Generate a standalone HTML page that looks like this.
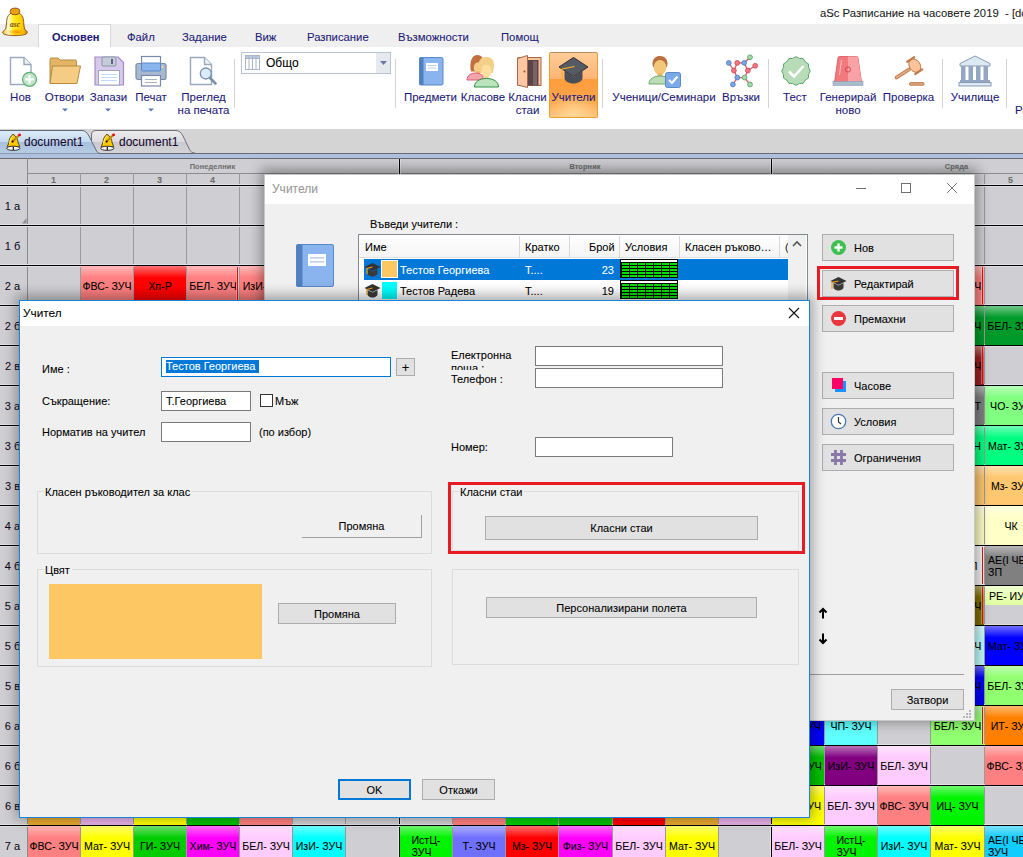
<!DOCTYPE html><html><head><meta charset="utf-8"><style>
*{box-sizing:border-box}
html,body{margin:0;padding:0}
body{width:1023px;height:857px;overflow:hidden;position:relative;background:#fff;font-family:"Liberation Sans",sans-serif;font-size:12px;color:#000;-webkit-text-stroke:0.08px currentColor}
.a{position:absolute}
.rib{color:#1e1a78;font-size:11.5px;white-space:nowrap;text-align:center;line-height:13px}
.sep{position:absolute;width:1px;background:#d4d4d4;top:59px;height:49px}
.cell{position:absolute;overflow:hidden;padding-top:0;display:flex;align-items:center;justify-content:center;text-align:center;font-size:10.6px;line-height:12px;color:#000;white-space:nowrap}
.btn{position:absolute;background:#e1e1e1;border:1px solid #adadad;font-size:11px;display:flex;align-items:center;justify-content:center;color:#000}
.inp{position:absolute;background:#fff;border:1px solid #7a7a7a}
.lbl{position:absolute;font-size:11px;white-space:nowrap;line-height:14px}
.grp{position:absolute;border:1px solid #dcdcdc}
.grpl{position:absolute;background:#f0f0f0;padding:0 2px 0 1px;font-size:11px;line-height:14px;white-space:nowrap}
</style></head><body>

<div class="a" style="left:0;top:0;width:1023px;height:24px;background:#fff"></div>
<div class="a" style="left:820px;top:6px;font-size:11.3px;white-space:nowrap;color:#1a1a1a;line-height:14px">aSc Разписание на часовете 2019&nbsp; - [document1]</div>
<div class="a" style="left:0;top:24px;width:1023px;height:23px;background:#efefef"></div>
<div class="a" style="left:38px;top:24px;width:73px;height:23px;background:#fff;border:1px solid #d8d8d8;border-bottom:none"></div>
<div class="a" style="left:52px;top:30px;font-size:11px;line-height:14px;color:#1e1a78;white-space:nowrap;font-weight:bold;">Основен</div>
<div class="a" style="left:127px;top:30px;font-size:11.3px;line-height:14px;color:#1e1a78;white-space:nowrap;">Файл</div>
<div class="a" style="left:182px;top:30px;font-size:11.3px;line-height:14px;color:#1e1a78;white-space:nowrap;">Задание</div>
<div class="a" style="left:255px;top:30px;font-size:11.3px;line-height:14px;color:#1e1a78;white-space:nowrap;">Виж</div>
<div class="a" style="left:307px;top:30px;font-size:11.3px;line-height:14px;color:#1e1a78;white-space:nowrap;">Разписание</div>
<div class="a" style="left:398px;top:30px;font-size:11.3px;line-height:14px;color:#1e1a78;white-space:nowrap;">Възможности</div>
<div class="a" style="left:501px;top:30px;font-size:11.3px;line-height:14px;color:#1e1a78;white-space:nowrap;">Помощ</div>
<div class="a" style="left:0;top:47px;width:1023px;height:82px;background:#fff"></div>
<svg class="a" style="left:0px;top:6px" width="30" height="32" viewBox="0 0 30 32"><defs><linearGradient id="bg1" x1="0" x2="1"><stop offset="0" stop-color="#f0b800"/><stop offset="0.22" stop-color="#fffce0"/><stop offset="0.45" stop-color="#ffec20"/><stop offset="0.8" stop-color="#ffc800"/><stop offset="1" stop-color="#d88000"/></linearGradient>
<radialGradient id="bg2" cx="0.55" cy="0.5" r="0.5"><stop offset="0" stop-color="#ff8800"/><stop offset="1" stop-color="#ffb800" stop-opacity="0.2"/></radialGradient></defs>
<path d="M6.5 18C6.5 11 8.5 6.5 15 6.2C21.5 6.5 23.8 11 23.8 18L24.5 23L27.3 25.8C28.2 28.5 22 29.6 15 29.6C8 29.6 1.8 28.5 2.7 25.8L5.7 23Z" fill="url(#bg1)" stroke="#8a4a10" stroke-width="0.9"/>
<ellipse cx="16" cy="26" rx="8.5" ry="3" fill="url(#bg2)"/>
<ellipse cx="15" cy="5.4" rx="4.8" ry="3.3" fill="#e8a010" stroke="#7a4010" stroke-width="0.8"/>
<text x="15" y="20.5" font-size="7.5" font-family="Liberation Serif" font-weight="bold" fill="#7a4a20" text-anchor="middle" font-style="italic">asc</text></svg>
<svg class="a" style="left:9px;top:56px" width="30" height="32" viewBox="0 0 30 32"><path d="M1.5 1.5H15L22 8.5V28.5H1.5Z" fill="#fff" stroke="#9aa8bc" stroke-width="1.4"/>
<path d="M15 1.5V8.5H22" fill="#eef2f6" stroke="#9aa8bc" stroke-width="1.4"/>
<circle cx="20.5" cy="23.3" r="7" fill="#bfe3c6" stroke="#5fae74" stroke-width="1.2"/>
<path d="M20.5 19V27.6M16.2 23.3H24.8" stroke="#fff" stroke-width="2.2"/></svg>
<svg class="a" style="left:49px;top:57px" width="33" height="28" viewBox="0 0 33 28"><path d="M1 2.5C1 1.5 1.5 1 2.5 1H9L11 3H26.5C27.3 3 27.5 3.5 27.5 4.5V26H1Z" fill="#e2b464" stroke="#b88a40" stroke-width="1"/>
<path d="M3.5 9H31.5L28 26.5H1Z" fill="#f4cc84" stroke="#b88a40" stroke-width="1"/></svg>
<svg class="a" style="left:94px;top:56px" width="31" height="30" viewBox="0 0 31 30"><path d="M1 1H24L29.5 6.5V29H1Z" fill="#d8c8ec" stroke="#a48cc8" stroke-width="1.2"/>
<rect x="8" y="1" width="14" height="9" rx="1" fill="#c4ccd8" stroke="#8a94a8" stroke-width="1"/>
<rect x="17" y="3" width="2" height="5" fill="#5a6478"/>
<rect x="4.5" y="14.5" width="21" height="14.5" fill="#fff" stroke="#a0a8b8" stroke-width="1"/>
<path d="M7 18.5H23M7 21.5H23M7 24.5H23" stroke="#bcdcf4" stroke-width="1"/></svg>
<svg class="a" style="left:135px;top:55px" width="33" height="33" viewBox="0 0 33 33"><rect x="6.5" y="1.5" width="19" height="9" fill="#fff" stroke="#7a8aa6" stroke-width="1.2"/>
<rect x="1" y="8.5" width="30" height="16" rx="2" fill="#a8b8d0" stroke="#7a8aa6" stroke-width="1.2"/>
<rect x="6.5" y="8" width="19" height="8" rx="1" fill="#8ab4ee" stroke="#5a88c8" stroke-width="1"/>
<circle cx="27.5" cy="12" r="1" fill="#ffe070"/>
<rect x="6.5" y="20.5" width="19" height="10.5" fill="#fff" stroke="#7a8aa6" stroke-width="1.2"/>
<path d="M10 24.5H22M10 27.5H22" stroke="#a8b4c4" stroke-width="1"/></svg>
<svg class="a" style="left:189px;top:56px" width="30" height="32" viewBox="0 0 30 32"><path d="M1.5 1.5H15.5L22.5 8.5V28.5H1.5Z" fill="#fff" stroke="#9aa8bc" stroke-width="1.4"/>
<path d="M15.5 1.5V8.5H22.5" fill="#eef2f6" stroke="#9aa8bc" stroke-width="1.4"/>
<path d="M20 21L26.5 27.5" stroke="#7a90a8" stroke-width="2.6" stroke-linecap="round"/>
<circle cx="16.8" cy="17.5" r="5.5" fill="#d8ecfc" stroke="#7a90a8" stroke-width="1.3"/></svg>
<svg class="a" style="left:61.5px;top:108px" width="6" height="4"><path d="M0 0.5H6L3 3.5Z" fill="#5a78b8"/></svg>
<svg class="a" style="left:105px;top:108px" width="6" height="4"><path d="M0 0.5H6L3 3.5Z" fill="#5a78b8"/></svg>
<svg class="a" style="left:147.5px;top:108px" width="6" height="4"><path d="M0 0.5H6L3 3.5Z" fill="#5a78b8"/></svg>
<div class="a" style="left:241px;top:52px;width:150px;height:22px;border:1px solid #b9c3d3;background:#fff"></div>
<div class="a" style="left:376px;top:53px;width:14px;height:20px;background:#e6e9f0"></div>
<svg class="a" style="left:380px;top:61px" width="7" height="4"><path d="M0 0H7L3.5 4Z" fill="#6a7aa8"/></svg>
<svg class="a" style="left:245px;top:55px" width="16" height="16" viewBox="0 0 16 16"><rect x="0.5" y="0.5" width="14" height="14" fill="#fff" stroke="#a8b4c8"/>
<rect x="0.5" y="0.5" width="14" height="3" fill="#b8cce4" stroke="#a8b4c8"/>
<path d="M4 1V15M7.5 1V15M11 1V15" stroke="#a8b4c8" stroke-width="1"/></svg>
<div class="a" style="left:266px;top:56px;font-size:12px;line-height:14px;color:#000">Общо</div>
<svg class="a" style="left:419px;top:57px" width="25" height="29" viewBox="0 0 25 29"><rect x="0.5" y="0.5" width="23.5" height="27.5" rx="1.5" fill="#8ab4ee" stroke="#5a88c8"/>
<rect x="0.5" y="0.5" width="4" height="27.5" fill="#5080c0"/>
<rect x="7" y="6" width="12" height="8" fill="#fff"/>
<path d="M8.5 8.5H17.5M8.5 11H17.5" stroke="#c4d0e0" stroke-width="1.1"/></svg>
<svg class="a" style="left:466px;top:54px" width="35" height="34" viewBox="0 0 35 34"><path d="M4.5 15C3.5 6 7 1 11 1C15.5 1 18 4 17.5 9L17 17.5H5Z" fill="#c27040"/>
<ellipse cx="12" cy="13.5" rx="4.2" ry="5.3" fill="#f8cc88"/>
<rect x="10" y="17" width="4" height="3" fill="#f0c070"/>
<path d="M1 26C1 21.5 5 19 9.5 19C13 19 16 20.5 17 22V26Z" fill="#f4a4ac" stroke="#e05070" stroke-width="0.9"/>
<path d="M13 12C12 6 15.5 3 20.5 3C25.5 3 28.5 6 28 12L27 19H14Z" fill="#f2d088"/>
<ellipse cx="20.5" cy="17" rx="5" ry="6.8" fill="#fde0a0"/>
<path d="M15 11C17 9 22 8 26 11" stroke="#f2d088" stroke-width="3" fill="none"/>
<rect x="18.5" y="22.5" width="4" height="2.5" fill="#f4d090"/>
<path d="M8.5 33C8.5 27.5 13.5 24.5 20.5 24.5C27.5 24.5 32.5 27.5 32.5 33Z" fill="#bde3bd" stroke="#309040" stroke-width="1"/></svg>
<svg class="a" style="left:516px;top:55px" width="27" height="33" viewBox="0 0 27 33"><rect x="2" y="2.5" width="23" height="28" fill="#f8c49c" stroke="#a86848" stroke-width="1"/>
<rect x="9" y="5" width="13.5" height="25.5" fill="#5a4448"/>
<rect x="17" y="6" width="4" height="24" fill="#7a6468"/>
<path d="M1.5 3.5L11.5 0.5V32.5L1.5 30Z" fill="#ffc8a4" stroke="#a86848" stroke-width="1"/>
<circle cx="8.5" cy="16.5" r="1" fill="#8a5030"/></svg>
<div class="a" style="left:549px;top:52px;width:49px;height:66px;border:1px solid #eaa030;border-top-color:#b89060;border-radius:2px;background:radial-gradient(ellipse 60% 40% at 50% 100%,#ffd898 0%,rgba(255,200,120,0) 100%),linear-gradient(#ffcc96 0%,#ffb476 40%,#ff9c3c 41%,#ffa448 75%,#ffc078 100%)"></div>
<svg class="a" style="left:556px;top:56px" width="34" height="30" viewBox="0 0 34 30"><path d="M8.5 15V22C8.5 25 13 27.5 17.5 27.5C22 27.5 26.5 25 26.5 22V15L17.5 21Z" fill="#4a4e56"/>
<path d="M17.5 1.5L32 11L17.5 20.5L3 11Z" fill="#565a62" stroke="#2c3038" stroke-width="1"/>
<path d="M18.5 10.5L6 13V24" stroke="#f8b020" stroke-width="1.1" fill="none"/><circle cx="6" cy="24.5" r="1" fill="#f8b020"/></svg>
<svg class="a" style="left:648px;top:55px" width="34" height="34" viewBox="0 0 34 34"><path d="M4.5 9C4.5 3.5 8 1 12 1C16.5 1 19.5 4 19.5 9L19 12H5Z" fill="#b87040"/>
<ellipse cx="12" cy="12.5" rx="6.3" ry="7.5" fill="#f2c878"/>
<rect x="9.5" y="18.5" width="5" height="3" fill="#e8b868"/>
<path d="M1 29C1 24 5.5 21 12 21C16 21 19 22 21 24V29Z" fill="#bcdcb4" stroke="#60a060" stroke-width="0.9"/>
<rect x="17.5" y="17.5" width="15" height="15" rx="2" fill="#7aaae8" stroke="#5a88c8" stroke-width="1"/>
<path d="M21 25L24 28L29.5 21.5" stroke="#fff" stroke-width="2.2" fill="none"/></svg>
<svg class="a" style="left:722px;top:52px" width="40" height="38" viewBox="0 0 40 38"><line x1="15.200000000000045" y1="11" x2="22.200000000000045" y2="11" stroke="#d06070" stroke-width="1.3"/><line x1="22.200000000000045" y1="11" x2="25.899999999999977" y2="18.5" stroke="#d06070" stroke-width="1.3"/><line x1="25.899999999999977" y1="18.5" x2="22.600000000000023" y2="25.599999999999994" stroke="#d06070" stroke-width="1.3"/><line x1="22.600000000000023" y1="25.599999999999994" x2="15.299999999999955" y2="25.599999999999994" stroke="#d06070" stroke-width="1.3"/><line x1="15.299999999999955" y1="25.599999999999994" x2="11.899999999999977" y2="18.5" stroke="#d06070" stroke-width="1.3"/><line x1="11.899999999999977" y1="18.5" x2="15.200000000000045" y2="11" stroke="#d06070" stroke-width="1.3"/><line x1="6.7999999999999545" y1="10.899999999999999" x2="11.899999999999977" y2="18.5" stroke="#d06070" stroke-width="1.3"/><line x1="28" y1="5.299999999999997" x2="22.200000000000045" y2="11" stroke="#d06070" stroke-width="1.3"/><line x1="33.200000000000045" y1="13.799999999999997" x2="25.899999999999977" y2="18.5" stroke="#d06070" stroke-width="1.3"/><line x1="10.899999999999977" y1="32.5" x2="15.299999999999955" y2="25.599999999999994" stroke="#d06070" stroke-width="1.3"/><line x1="28" y1="32.5" x2="22.600000000000023" y2="25.599999999999994" stroke="#d06070" stroke-width="1.3"/><circle cx="6.7999999999999545" cy="10.899999999999999" r="2.4" fill="#7aa4e4" stroke="#4a78c4" stroke-width="0.8"/><circle cx="15.200000000000045" cy="10.899999999999999" r="2.4" fill="#f07880" stroke="#d04050" stroke-width="0.8"/><circle cx="22.200000000000045" cy="10.899999999999999" r="2.4" fill="#7aa4e4" stroke="#4a78c4" stroke-width="0.8"/><circle cx="28" cy="5.299999999999997" r="2.4" fill="#a8d8a8" stroke="#50a060" stroke-width="0.8"/><circle cx="11.899999999999977" cy="18.5" r="2.4" fill="#f07880" stroke="#d04050" stroke-width="0.8"/><circle cx="25.899999999999977" cy="18.5" r="2.4" fill="#f07880" stroke="#d04050" stroke-width="0.8"/><circle cx="33.200000000000045" cy="13.799999999999997" r="2.4" fill="#f07880" stroke="#d04050" stroke-width="0.8"/><circle cx="15.299999999999955" cy="25.599999999999994" r="2.4" fill="#7aa4e4" stroke="#4a78c4" stroke-width="0.8"/><circle cx="22.600000000000023" cy="25.599999999999994" r="2.4" fill="#a8d8a8" stroke="#50a060" stroke-width="0.8"/><circle cx="10.899999999999977" cy="32.5" r="2.4" fill="#7aa4e4" stroke="#4a78c4" stroke-width="0.8"/><circle cx="28" cy="32.5" r="2.4" fill="#a8d8a8" stroke="#50a060" stroke-width="0.8"/></svg>
<svg class="a" style="left:781px;top:56px" width="30" height="30" viewBox="0 0 30 30"><polygon points="15.00,0.70 18.36,2.44 22.15,2.62 24.19,5.81 27.38,7.85 27.56,11.64 29.30,15.00 27.56,18.36 27.38,22.15 24.19,24.19 22.15,27.38 18.36,27.56 15.00,29.30 11.64,27.56 7.85,27.38 5.81,24.19 2.62,22.15 2.44,18.36 0.70,15.00 2.44,11.64 2.62,7.85 5.81,5.81 7.85,2.62 11.64,2.44" fill="#b8dcb8" stroke="#5aa86a" stroke-width="1"/><path d="M8 15.5L13 20.5L22.5 10" stroke="#fff" stroke-width="2.6" fill="none"/></svg>
<svg class="a" style="left:832px;top:55px" width="32" height="33" viewBox="0 0 32 33"><path d="M7.5 1.5H24.5C25.5 1.5 26 2 26 3L29.5 27H2.5L6 3C6 2 6.5 1.5 7.5 1.5Z" fill="#f27a7e" stroke="#d85058" stroke-width="0.8"/>
<path d="M16 1.5H24.5C25.5 1.5 26 2 26 3L29.5 27H16Z" fill="#f8a2a6"/>
<circle cx="16" cy="14.5" r="2.6" fill="none" stroke="#d84850" stroke-width="1"/>
<path d="M9.5 5L7.5 20" stroke="#fcc" stroke-width="0.8"/>
<rect x="1" y="26.5" width="30" height="4" fill="#a8bccc" stroke="#8aa0b4" stroke-width="0.6"/></svg>
<svg class="a" style="left:894px;top:55px" width="32" height="32" viewBox="0 0 32 32"><path d="M2.5 22.5L15 14.5" stroke="#b87848" stroke-width="3.6" stroke-linecap="round"/>
<path d="M2.5 22.5L15 14.5" stroke="#e8aa80" stroke-width="1.8" stroke-linecap="round"/>
<g transform="rotate(-33 20.8 10.6)"><ellipse cx="20.8" cy="10.6" rx="5.4" ry="7.2" fill="#fdc49a" stroke="#b87848" stroke-width="0.9"/>
<rect x="15.6" y="2.2" width="10.4" height="2.2" rx="1" fill="#c07a4c"/><rect x="15.6" y="16.8" width="10.4" height="2.2" rx="1" fill="#c07a4c"/></g>
<rect x="15.5" y="27.5" width="14.5" height="2.8" rx="1" fill="#dca078" stroke="#b87848" stroke-width="0.8"/></svg>
<svg class="a" style="left:958px;top:55px" width="34" height="33" viewBox="0 0 34 33"><path d="M17 1L32 8.5V11H2V8.5Z" fill="#dce8f2" stroke="#8a9cb4" stroke-width="1"/>
<rect x="3" y="11" width="4.5" height="15" fill="#93a7c2"/><rect x="10.5" y="11" width="4.5" height="15" fill="#93a7c2"/><rect x="18" y="11" width="4.5" height="15" fill="#93a7c2"/><rect x="25.5" y="11" width="4.5" height="15" fill="#93a7c2"/>
<rect x="2" y="25" width="30" height="2.5" fill="#93a7c2"/>
<rect x="1" y="27.5" width="32" height="3.5" fill="#dce8f2" stroke="#8a9cb4" stroke-width="1"/></svg><div class="a rib" style="left:0px;top:91px;width:41px">Нов</div>
<div class="a rib" style="left:42px;top:91px;width:45px">Отвори</div>
<div class="a rib" style="left:88px;top:91px;width:41px">Запази</div>
<div class="a rib" style="left:131px;top:91px;width:40px">Печат</div>
<div class="a rib" style="left:176px;top:91px;width:55px">Преглед<br>на печата</div>
<div class="a rib" style="left:402px;top:91px;width:57px">Предмети</div>
<div class="a rib" style="left:460px;top:91px;width:46px">Класове</div>
<div class="a rib" style="left:507px;top:91px;width:41px">Класни<br>стаи</div>
<div class="a rib" style="left:549px;top:91px;width:49px">Учители</div>
<div class="a rib" style="left:608px;top:91px;width:112px">Ученици/Семинари</div>
<div class="a rib" style="left:720px;top:91px;width:42px">Връзки</div>
<div class="a rib" style="left:775px;top:91px;width:40px">Тест</div>
<div class="a rib" style="left:816px;top:91px;width:64px">Генерирай<br>ново</div>
<div class="a rib" style="left:880px;top:91px;width:57px">Проверка</div>
<div class="a rib" style="left:948px;top:91px;width:54px">Училище</div>
<div class="a rib" style="left:1015px;top:104px">Ра</div>
<div class="sep" style="left:234px"></div>
<div class="sep" style="left:395px"></div>
<div class="sep" style="left:602px"></div>
<div class="sep" style="left:768px"></div>
<div class="sep" style="left:942px"></div>
<div class="sep" style="left:1006px"></div>
<div class="a" style="left:0;top:129px;width:1023px;height:29px;background:#d4d4d4"></div>
<div class="a" style="left:0;top:153px;width:1023px;height:1px;background:#6a6a72"></div><div class="a" style="left:0;top:154px;width:1023px;height:4px;background:#b0c0de"></div>
<svg class="a" style="left:88px;top:129px" width="110" height="24" viewBox="0 0 110 24">
<defs><linearGradient id="t2" x1="0" y1="0" x2="0" y2="1"><stop offset="0" stop-color="#ececee"/><stop offset="0.5" stop-color="#dcdce0"/><stop offset="0.51" stop-color="#cacace"/><stop offset="1" stop-color="#d4d4d8"/></linearGradient></defs>
<path d="M3.5 24V6C3.5 3 5 1.5 8 1.5H88C91 1.5 93 3.5 95 7L101.5 20.5C103 23 104 24 107 24" fill="url(#t2)" stroke="#707078" stroke-width="1"/></svg>
<svg class="a" style="left:0;top:129px" width="104" height="25" viewBox="0 0 104 25">
<defs><linearGradient id="t1" x1="0" y1="0" x2="0" y2="1"><stop offset="0" stop-color="#dcecfa"/><stop offset="0.5" stop-color="#c4daf0"/><stop offset="0.51" stop-color="#a8c0dc"/><stop offset="1" stop-color="#b8cce4"/></linearGradient></defs>
<path d="M-1 25V1.5H82C85 1.5 87 3.5 89 7L96 21C97.5 23.5 98.5 24.5 101 24.5V25Z" fill="url(#t1)" stroke="#606878" stroke-width="1"/></svg>
<svg class="a" style="left:5px;top:133px" width="18" height="19" viewBox="0 0 18 19"><path d="M8 1.2C5.5 3 4.2 6 3.8 10L2.2 13.8H14.8L13.2 10C12.8 6 11 3 8 1.2Z" fill="#ffc800" stroke="#4a3a10" stroke-width="0.9"/>
<path d="M4.5 10.5C4.8 7 6 4.5 8 3" stroke="#fff080" stroke-width="1" fill="none"/>
<ellipse cx="8.3" cy="15.3" rx="6.6" ry="2.1" fill="#f4f4f4" stroke="#222" stroke-width="0.9"/>
<rect x="7.7" y="13.8" width="1.3" height="3.3" fill="#222"/>
<path d="M8 8.2L14.5 1.8" stroke="#b88a00" stroke-width="2"/>
<circle cx="7.6" cy="8.6" r="1.1" fill="#111"/><circle cx="14.6" cy="1.9" r="1.4" fill="#f00000"/></svg>
<svg class="a" style="left:99px;top:133px" width="18" height="19" viewBox="0 0 18 19"><path d="M8 1.2C5.5 3 4.2 6 3.8 10L2.2 13.8H14.8L13.2 10C12.8 6 11 3 8 1.2Z" fill="#ffc800" stroke="#4a3a10" stroke-width="0.9"/>
<path d="M4.5 10.5C4.8 7 6 4.5 8 3" stroke="#fff080" stroke-width="1" fill="none"/>
<ellipse cx="8.3" cy="15.3" rx="6.6" ry="2.1" fill="#f4f4f4" stroke="#222" stroke-width="0.9"/>
<rect x="7.7" y="13.8" width="1.3" height="3.3" fill="#222"/>
<path d="M8 8.2L14.5 1.8" stroke="#b88a00" stroke-width="2"/>
<circle cx="7.6" cy="8.6" r="1.1" fill="#111"/><circle cx="14.6" cy="1.9" r="1.4" fill="#f00000"/></svg>
<div class="a" style="left:24px;top:135px;font-size:12px;line-height:14px;color:#180830">document1</div>
<div class="a" style="left:119px;top:135px;font-size:12px;line-height:14px;color:#180830">document1</div>
<div class="a" style="left:0;top:158px;width:1023px;height:699px;background:#cfcfd3"></div>
<div class="a" style="left:0;top:158px;width:1023px;height:1px;background:#6a6a70"></div>
<div class="a" style="left:27px;top:173px;width:996px;height:1px;background:#8c8c8c"></div>
<div class="a" style="left:27px;top:158px;width:1px;height:700px;background:#8c8c8c"></div>
<div class="a" style="left:398px;top:159px;width:3px;height:700px;background:linear-gradient(90deg,#e4e4e8 0,#e4e4e8 33%,#000 33%,#000 67%,#e4e4e8 67%)"></div>
<div class="a" style="left:770px;top:159px;width:3px;height:700px;background:linear-gradient(90deg,#e4e4e8 0,#e4e4e8 33%,#000 33%,#000 67%,#e4e4e8 67%)"></div>
<div class="a" style="left:80px;top:173px;width:1px;height:684px;background:#9a9a9a"></div>
<div class="a" style="left:133px;top:173px;width:1px;height:684px;background:#9a9a9a"></div>
<div class="a" style="left:186px;top:173px;width:1px;height:684px;background:#9a9a9a"></div>
<div class="a" style="left:239px;top:173px;width:1px;height:684px;background:#9a9a9a"></div>
<div class="a" style="left:292px;top:173px;width:1px;height:684px;background:#9a9a9a"></div>
<div class="a" style="left:345px;top:173px;width:1px;height:684px;background:#9a9a9a"></div>
<div class="a" style="left:452px;top:173px;width:1px;height:684px;background:#9a9a9a"></div>
<div class="a" style="left:505px;top:173px;width:1px;height:684px;background:#9a9a9a"></div>
<div class="a" style="left:558px;top:173px;width:1px;height:684px;background:#9a9a9a"></div>
<div class="a" style="left:612px;top:173px;width:1px;height:684px;background:#9a9a9a"></div>
<div class="a" style="left:665px;top:173px;width:1px;height:684px;background:#9a9a9a"></div>
<div class="a" style="left:718px;top:173px;width:1px;height:684px;background:#9a9a9a"></div>
<div class="a" style="left:824px;top:173px;width:1px;height:684px;background:#9a9a9a"></div>
<div class="a" style="left:877px;top:173px;width:1px;height:684px;background:#9a9a9a"></div>
<div class="a" style="left:930px;top:173px;width:1px;height:684px;background:#9a9a9a"></div>
<div class="a" style="left:984px;top:173px;width:1px;height:684px;background:#9a9a9a"></div>
<div class="a" style="left:27px;top:175px;width:53px;height:11px;text-align:center;font-size:9px;line-height:11px;font-weight:bold;color:#6e6e6e">1</div>
<div class="a" style="left:80px;top:175px;width:53px;height:11px;text-align:center;font-size:9px;line-height:11px;font-weight:bold;color:#6e6e6e">2</div>
<div class="a" style="left:133px;top:175px;width:53px;height:11px;text-align:center;font-size:9px;line-height:11px;font-weight:bold;color:#6e6e6e">3</div>
<div class="a" style="left:186px;top:175px;width:53px;height:11px;text-align:center;font-size:9px;line-height:11px;font-weight:bold;color:#6e6e6e">4</div>
<div class="a" style="left:984px;top:175px;width:53px;height:11px;text-align:center;font-size:9px;line-height:11px;font-weight:bold;color:#6e6e6e">5</div>
<div class="a" style="left:27px;top:162px;width:371px;text-align:center;font-size:7.4px;line-height:9px;font-weight:bold;color:#707070;letter-spacing:0.1px">Понеделник</div>
<div class="a" style="left:399px;top:162px;width:372px;text-align:center;font-size:7.4px;line-height:9px;font-weight:bold;color:#707070;letter-spacing:0.1px">Вторник</div>
<div class="a" style="left:771px;top:162px;width:371px;text-align:center;font-size:7.4px;line-height:9px;font-weight:bold;color:#707070;letter-spacing:0.1px">Сряда</div>
<div class="a" style="left:0;top:184px;width:1023px;height:3px;background:linear-gradient(#e2e2e6 0,#e2e2e6 33%,#000 33%,#000 67%,#dedee2 67%)"></div>
<div class="a" style="left:0;top:224px;width:1023px;height:3px;background:linear-gradient(#e2e2e6 0,#e2e2e6 33%,#000 33%,#000 67%,#dedee2 67%)"></div>
<div class="a" style="left:0;top:264px;width:1023px;height:3px;background:linear-gradient(#e2e2e6 0,#e2e2e6 33%,#000 33%,#000 67%,#dedee2 67%)"></div>
<div class="a" style="left:0;top:304px;width:1023px;height:3px;background:linear-gradient(#e2e2e6 0,#e2e2e6 33%,#000 33%,#000 67%,#dedee2 67%)"></div>
<div class="a" style="left:0;top:344px;width:1023px;height:3px;background:linear-gradient(#e2e2e6 0,#e2e2e6 33%,#000 33%,#000 67%,#dedee2 67%)"></div>
<div class="a" style="left:0;top:384px;width:1023px;height:3px;background:linear-gradient(#e2e2e6 0,#e2e2e6 33%,#000 33%,#000 67%,#dedee2 67%)"></div>
<div class="a" style="left:0;top:424px;width:1023px;height:3px;background:linear-gradient(#e2e2e6 0,#e2e2e6 33%,#000 33%,#000 67%,#dedee2 67%)"></div>
<div class="a" style="left:0;top:464px;width:1023px;height:3px;background:linear-gradient(#e2e2e6 0,#e2e2e6 33%,#000 33%,#000 67%,#dedee2 67%)"></div>
<div class="a" style="left:0;top:504px;width:1023px;height:3px;background:linear-gradient(#e2e2e6 0,#e2e2e6 33%,#000 33%,#000 67%,#dedee2 67%)"></div>
<div class="a" style="left:0;top:544px;width:1023px;height:3px;background:linear-gradient(#e2e2e6 0,#e2e2e6 33%,#000 33%,#000 67%,#dedee2 67%)"></div>
<div class="a" style="left:0;top:584px;width:1023px;height:3px;background:linear-gradient(#e2e2e6 0,#e2e2e6 33%,#000 33%,#000 67%,#dedee2 67%)"></div>
<div class="a" style="left:0;top:624px;width:1023px;height:3px;background:linear-gradient(#e2e2e6 0,#e2e2e6 33%,#000 33%,#000 67%,#dedee2 67%)"></div>
<div class="a" style="left:0;top:664px;width:1023px;height:3px;background:linear-gradient(#e2e2e6 0,#e2e2e6 33%,#000 33%,#000 67%,#dedee2 67%)"></div>
<div class="a" style="left:0;top:704px;width:1023px;height:3px;background:linear-gradient(#e2e2e6 0,#e2e2e6 33%,#000 33%,#000 67%,#dedee2 67%)"></div>
<div class="a" style="left:0;top:744px;width:1023px;height:3px;background:linear-gradient(#e2e2e6 0,#e2e2e6 33%,#000 33%,#000 67%,#dedee2 67%)"></div>
<div class="a" style="left:0;top:784px;width:1023px;height:3px;background:linear-gradient(#e2e2e6 0,#e2e2e6 33%,#000 33%,#000 67%,#dedee2 67%)"></div>
<div class="a" style="left:0;top:824px;width:1023px;height:3px;background:linear-gradient(#e2e2e6 0,#e2e2e6 33%,#000 33%,#000 67%,#dedee2 67%)"></div>
<div class="cell" style="left:81px;top:266px;width:52px;height:39px;background:linear-gradient(#ffb9b9 0%,#ff8080 30%);"><span style="display:inline-block;text-align:left">ФВС- ЗУЧ</span></div>
<div class="cell" style="left:134px;top:266px;width:52px;height:39px;background:linear-gradient(#ff7272 0%,#ff0000 30%);"><span style="display:inline-block;text-align:left">Хп-Р</span></div>
<div class="cell" style="left:187px;top:266px;width:52px;height:39px;background:linear-gradient(#ffb9b9 0%,#ff8080 30%);"><span style="display:inline-block;text-align:left">БЕЛ- ЗУЧ</span></div>
<div class="a" style="left:237px;top:267px;width:1px;height:37px;background:#ff0000;box-shadow:-1px 0 0 rgba(255,255,255,0.35),1px 0 0 rgba(255,255,255,0.35)"></div>
<div class="cell" style="left:240px;top:266px;width:52px;height:39px;background:linear-gradient(#ffb9b9 0%,#ff8080 30%);"><span style="display:inline-block;text-align:left">ИзИ- ЗУЧ</span></div>
<div class="cell" style="left:931px;top:266px;width:53px;height:39px;background:linear-gradient(#ffb9b9 0%,#ff8080 30%);"><span style="display:inline-block;text-align:left">БЕЛ- ЗУЧ</span></div>
<div class="a" style="left:982px;top:267px;width:1px;height:37px;background:#ff0000;box-shadow:-1px 0 0 rgba(255,255,255,0.35),1px 0 0 rgba(255,255,255,0.35)"></div>
<div class="cell" style="left:931px;top:306px;width:53px;height:39px;background:linear-gradient(#72c789 0%,#009a2a 30%);"><span style="display:inline-block;text-align:left">БЕЛ- ЗУЧ</span></div>
<div class="cell" style="left:985px;top:306px;width:52px;height:39px;background:linear-gradient(#72c789 0%,#009a2a 30%);"><span style="display:inline-block;text-align:left">БЕЛ- ЗУЧ</span></div>
<div class="cell" style="left:931px;top:346px;width:53px;height:39px;background:linear-gradient(#ca8484 0%,#a02020 30%);"><span style="display:inline-block;text-align:left">БЕЛ- ЗУЧ</span></div>
<div class="a" style="left:982px;top:347px;width:1px;height:37px;background:#ff0000;box-shadow:-1px 0 0 rgba(255,255,255,0.35),1px 0 0 rgba(255,255,255,0.35)"></div>
<div class="cell" style="left:931px;top:386px;width:53px;height:39px;background:linear-gradient(#b9b9b9 0%,#808080 30%);"><span style="display:inline-block;text-align:left">БЕЛ- ЗУТ</span></div>
<div class="cell" style="left:985px;top:386px;width:52px;height:39px;background:linear-gradient(#b9ffb9 0%,#80ff80 30%);"><span style="display:inline-block;text-align:left">ЧО- ЗУЧ</span></div>
<div class="cell" style="left:931px;top:426px;width:53px;height:39px;background:linear-gradient(#72ffb9 0%,#00ff80 30%);"><span style="display:inline-block;text-align:left">Мат- ЗУН</span></div>
<div class="cell" style="left:985px;top:426px;width:52px;height:39px;background:linear-gradient(#72ffb9 0%,#00ff80 30%);"><span style="display:inline-block;text-align:left">Мат- ЗУЧ</span></div>
<div class="cell" style="left:931px;top:466px;width:53px;height:39px;background:linear-gradient(#ffe0b0 0%,#ffc870 30%);"><span style="display:inline-block;text-align:left"></span></div>
<div class="cell" style="left:985px;top:466px;width:52px;height:39px;background:linear-gradient(#ffe0b0 0%,#ffc870 30%);"><span style="display:inline-block;text-align:left">Мз- ЗУЧ</span></div>
<div class="cell" style="left:931px;top:506px;width:53px;height:39px;background:linear-gradient(#ffffe0 0%,#ffffc8 30%);"><span style="display:inline-block;text-align:left"></span></div>
<div class="cell" style="left:985px;top:506px;width:52px;height:39px;background:linear-gradient(#ffffe0 0%,#ffffc8 30%);"><span style="display:inline-block;text-align:left">ЧК</span></div>
<div class="cell" style="left:931px;top:546px;width:53px;height:39px;background:linear-gradient(#f8f8f8 0%,#f4f4f4 30%);"><span style="display:inline-block;text-align:left">Мат- ЗП</span></div>
<div class="a" style="left:982px;top:547px;width:1px;height:37px;background:#ff0000;box-shadow:-1px 0 0 rgba(255,255,255,0.35),1px 0 0 rgba(255,255,255,0.35)"></div>
<div class="cell" style="justify-content:flex-start;padding-left:3px;left:985px;top:546px;width:52px;height:39px;background:linear-gradient(#b9b9b9 0%,#808080 30%);"><span style="display:inline-block;text-align:left">AE(I ЧЕ<br>ЗП</span></div>
<div class="cell" style="left:931px;top:586px;width:53px;height:39px;background:linear-gradient(#b9b072 0%,#807000 30%);"><span style="display:inline-block;text-align:left">БЕЛ- ЗУЧ</span></div>
<div class="a" style="left:982px;top:587px;width:1px;height:37px;background:#ff0000;box-shadow:-1px 0 0 rgba(255,255,255,0.35),1px 0 0 rgba(255,255,255,0.35)"></div>
<div class="cell" style="left:931px;top:626px;width:53px;height:39px;background:linear-gradient(#dcffff 0%,#c0ffff 30%);"><span style="display:inline-block;text-align:left">БЕЛ- ЗУЧ</span></div>
<div class="cell" style="left:985px;top:626px;width:52px;height:39px;background:linear-gradient(#7272ff 0%,#0000ff 30%);"><span style="display:inline-block;text-align:left">Мат- ЗУЧ</span></div>
<div class="cell" style="left:931px;top:666px;width:53px;height:39px;background:linear-gradient(#7272ff 0%,#0000ff 30%);"><span style="display:inline-block;text-align:left">БЕЛ- ЗУЧ</span></div>
<div class="cell" style="left:985px;top:666px;width:52px;height:39px;background:linear-gradient(#c1ffb0 0%,#90ff70 30%);"><span style="display:inline-block;text-align:left">БЕЛ- ЗУЧ</span></div>
<div class="cell" style="left:772px;top:706px;width:52px;height:39px;background:linear-gradient(#7272ff 0%,#0000ff 30%);"><span style="display:inline-block;text-align:left">Мат- ЗУЧ</span></div>
<div class="cell" style="left:825px;top:706px;width:52px;height:39px;background:linear-gradient(#a7ffff 0%,#60ffff 30%);"><span style="display:inline-block;text-align:left">ЧП- ЗУЧ</span></div>
<div class="cell" style="left:931px;top:706px;width:53px;height:39px;background:linear-gradient(#c1ffb0 0%,#90ff70 30%);"><span style="display:inline-block;text-align:left">БЕЛ- ЗУЧ</span></div>
<div class="a" style="left:982px;top:707px;width:1px;height:37px;background:#ff0000;box-shadow:-1px 0 0 rgba(255,255,255,0.35),1px 0 0 rgba(255,255,255,0.35)"></div>
<div class="cell" style="left:985px;top:706px;width:52px;height:39px;background:linear-gradient(#ffb972 0%,#ff8000 30%);"><span style="display:inline-block;text-align:left">ИТ- ЗУЧ</span></div>
<div class="cell" style="left:772px;top:746px;width:52px;height:39px;background:linear-gradient(#72dc72 0%,#00c000 30%);"><span style="display:inline-block;text-align:left">БЕЛ- ЗУЧ</span></div>
<div class="cell" style="left:825px;top:746px;width:52px;height:39px;background:linear-gradient(#b972b9 0%,#800080 30%);"><span style="display:inline-block;text-align:left">ИзИ- ЗУЧ</span></div>
<div class="cell" style="left:878px;top:746px;width:52px;height:39px;background:linear-gradient(#ffe2ff 0%,#ffccff 30%);"><span style="display:inline-block;text-align:left">БЕЛ- ЗУЧ</span></div>
<div class="cell" style="left:985px;top:746px;width:52px;height:39px;background:linear-gradient(#ffb9b9 0%,#ff8080 30%);"><span style="display:inline-block;text-align:left">ФВС- ЗУЧ</span></div>
<div class="cell" style="left:28px;top:786px;width:52px;height:39px;background:linear-gradient(#f2cf8d 0%,#e8a830 30%);"><span style="display:inline-block;text-align:left"></span></div>
<div class="cell" style="left:81px;top:786px;width:52px;height:39px;background:linear-gradient(#f2d3f2 0%,#e8b0e8 30%);"><span style="display:inline-block;text-align:left"></span></div>
<div class="cell" style="left:134px;top:786px;width:52px;height:39px;background:linear-gradient(#ffff72 0%,#ffff00 30%);"><span style="display:inline-block;text-align:left"></span></div>
<div class="cell" style="left:187px;top:786px;width:52px;height:39px;background:linear-gradient(#72dc72 0%,#00c000 30%);"><span style="display:inline-block;text-align:left"></span></div>
<div class="cell" style="left:240px;top:786px;width:52px;height:39px;background:linear-gradient(#ffb9b9 0%,#ff8080 30%);"><span style="display:inline-block;text-align:left"></span></div>
<div class="cell" style="left:453px;top:786px;width:52px;height:39px;background:linear-gradient(#ffb9b9 0%,#ff8080 30%);"><span style="display:inline-block;text-align:left"></span></div>
<div class="cell" style="left:506px;top:786px;width:52px;height:39px;background:linear-gradient(#72e272 0%,#00cc00 30%);"><span style="display:inline-block;text-align:left"></span></div>
<div class="cell" style="left:559px;top:786px;width:53px;height:39px;background:linear-gradient(#72dc72 0%,#00c000 30%);"><span style="display:inline-block;text-align:left"></span></div>
<div class="cell" style="left:613px;top:786px;width:52px;height:39px;background:linear-gradient(#ff7272 0%,#ff0000 30%);"><span style="display:inline-block;text-align:left"></span></div>
<div class="cell" style="left:666px;top:786px;width:52px;height:39px;background:linear-gradient(#f2cf8d 0%,#e8a830 30%);"><span style="display:inline-block;text-align:left"></span></div>
<div class="cell" style="left:719px;top:786px;width:52px;height:39px;background:linear-gradient(#f2d3f2 0%,#e8b0e8 30%);"><span style="display:inline-block;text-align:left"></span></div>
<div class="cell" style="left:772px;top:786px;width:52px;height:39px;background:linear-gradient(#ffff72 0%,#ffff00 30%);"><span style="display:inline-block;text-align:left">Мат- ЗУЧ</span></div>
<div class="cell" style="left:825px;top:786px;width:52px;height:39px;background:linear-gradient(#ffe2ff 0%,#ffccff 30%);"><span style="display:inline-block;text-align:left">БЕЛ- ЗУЧ</span></div>
<div class="cell" style="left:878px;top:786px;width:52px;height:39px;background:linear-gradient(#ffb9b9 0%,#ff8080 30%);"><span style="display:inline-block;text-align:left">ФВС- ЗУЧ</span></div>
<div class="cell" style="left:931px;top:786px;width:53px;height:39px;background:linear-gradient(#72f872 0%,#00f400 30%);"><span style="display:inline-block;text-align:left">ИЦ- ЗУЧ</span></div>
<div class="cell" style="left:28px;top:826px;width:52px;height:39px;background:linear-gradient(#ffb9b9 0%,#ff8080 30%);"><span style="display:inline-block;text-align:left">ФВС- ЗУЧ</span></div>
<div class="cell" style="left:81px;top:826px;width:52px;height:39px;background:linear-gradient(#ffff72 0%,#ffff00 30%);"><span style="display:inline-block;text-align:left">Мат- ЗУЧ</span></div>
<div class="cell" style="left:134px;top:826px;width:52px;height:39px;background:linear-gradient(#72e272 0%,#00cc00 30%);"><span style="display:inline-block;text-align:left">ГИ- ЗУЧ</span></div>
<div class="cell" style="left:187px;top:826px;width:52px;height:39px;background:linear-gradient(#ff72ff 0%,#ff00ff 30%);"><span style="display:inline-block;text-align:left">Хим- ЗУЧ</span></div>
<div class="cell" style="left:240px;top:826px;width:52px;height:39px;background:linear-gradient(#ffe2ff 0%,#ffccff 30%);"><span style="display:inline-block;text-align:left">БЕЛ- ЗУЧ</span></div>
<div class="cell" style="left:293px;top:826px;width:52px;height:39px;background:linear-gradient(#72ffff 0%,#00ffff 30%);"><span style="display:inline-block;text-align:left">ИзИ- ЗУЧ</span></div>
<div class="cell" style="left:400px;top:826px;width:52px;height:39px;background:linear-gradient(#72f872 0%,#00f400 30%);"><span style="display:inline-block;text-align:left">ИстЦ-<br>ЗУЧ</span></div>
<div class="cell" style="left:453px;top:826px;width:52px;height:39px;background:linear-gradient(#b0b0ff 0%,#7070ff 30%);"><span style="display:inline-block;text-align:left">Т- ЗУЧ</span></div>
<div class="cell" style="left:506px;top:826px;width:52px;height:39px;background:linear-gradient(#ff7272 0%,#ff0000 30%);"><span style="display:inline-block;text-align:left">Мз- ЗУЧ</span></div>
<div class="cell" style="left:559px;top:826px;width:53px;height:39px;background:linear-gradient(#ff72ff 0%,#ff00ff 30%);"><span style="display:inline-block;text-align:left">Физ- ЗУЧ</span></div>
<div class="cell" style="left:613px;top:826px;width:52px;height:39px;background:linear-gradient(#ffe2ff 0%,#ffccff 30%);"><span style="display:inline-block;text-align:left">БЕЛ- ЗУЧ</span></div>
<div class="cell" style="left:666px;top:826px;width:52px;height:39px;background:linear-gradient(#ffff72 0%,#ffff00 30%);"><span style="display:inline-block;text-align:left">Мат- ЗУЧ</span></div>
<div class="cell" style="left:772px;top:826px;width:52px;height:39px;background:linear-gradient(#ffe2ff 0%,#ffccff 30%);"><span style="display:inline-block;text-align:left">БЕЛ- ЗУЧ</span></div>
<div class="cell" style="left:825px;top:826px;width:52px;height:39px;background:linear-gradient(#72f872 0%,#00f400 30%);"><span style="display:inline-block;text-align:left">ИстЦ-<br>ЗУЧ</span></div>
<div class="cell" style="left:878px;top:826px;width:52px;height:39px;background:linear-gradient(#72ffff 0%,#00ffff 30%);"><span style="display:inline-block;text-align:left">ИзИ- ЗУЧ</span></div>
<div class="cell" style="left:931px;top:826px;width:53px;height:39px;background:linear-gradient(#ffff72 0%,#ffff00 30%);"><span style="display:inline-block;text-align:left">Мат- ЗУЧ</span></div>
<div class="cell" style="justify-content:flex-start;padding-left:3px;left:985px;top:826px;width:52px;height:39px;background:linear-gradient(#7be2ff 0%,#10ccff 30%);"><span style="display:inline-block;text-align:left">AE(I ЧЕ<br>ЗУЧ</span></div>
<div class="a" style="left:0;top:185px;width:1023px;height:1px;background:#000"></div>
<div class="a" style="left:-1px;top:199px;width:27px;text-align:center;font-size:11px;line-height:14px;color:#100820">1 а</div>
<div class="a" style="left:0;top:225px;width:1023px;height:1px;background:#000"></div>
<div class="a" style="left:-1px;top:239px;width:27px;text-align:center;font-size:11px;line-height:14px;color:#100820">1 б</div>
<div class="a" style="left:0;top:265px;width:1023px;height:1px;background:#000"></div>
<div class="a" style="left:-1px;top:279px;width:27px;text-align:center;font-size:11px;line-height:14px;color:#100820">2 а</div>
<div class="a" style="left:0;top:305px;width:1023px;height:1px;background:#000"></div>
<div class="a" style="left:-1px;top:319px;width:27px;text-align:center;font-size:11px;line-height:14px;color:#100820">2 б</div>
<div class="a" style="left:0;top:345px;width:1023px;height:1px;background:#000"></div>
<div class="a" style="left:-1px;top:359px;width:27px;text-align:center;font-size:11px;line-height:14px;color:#100820">2 в</div>
<div class="a" style="left:0;top:385px;width:1023px;height:1px;background:#000"></div>
<div class="a" style="left:-1px;top:399px;width:27px;text-align:center;font-size:11px;line-height:14px;color:#100820">3 а</div>
<div class="a" style="left:0;top:425px;width:1023px;height:1px;background:#000"></div>
<div class="a" style="left:-1px;top:439px;width:27px;text-align:center;font-size:11px;line-height:14px;color:#100820">3 б</div>
<div class="a" style="left:0;top:465px;width:1023px;height:1px;background:#000"></div>
<div class="a" style="left:-1px;top:479px;width:27px;text-align:center;font-size:11px;line-height:14px;color:#100820">3 в</div>
<div class="a" style="left:0;top:505px;width:1023px;height:1px;background:#000"></div>
<div class="a" style="left:-1px;top:519px;width:27px;text-align:center;font-size:11px;line-height:14px;color:#100820">4 а</div>
<div class="a" style="left:0;top:545px;width:1023px;height:1px;background:#000"></div>
<div class="a" style="left:-1px;top:559px;width:27px;text-align:center;font-size:11px;line-height:14px;color:#100820">4 б</div>
<div class="a" style="left:0;top:585px;width:1023px;height:1px;background:#000"></div>
<div class="a" style="left:-1px;top:599px;width:27px;text-align:center;font-size:11px;line-height:14px;color:#100820">5 а</div>
<div class="a" style="left:0;top:625px;width:1023px;height:1px;background:#000"></div>
<div class="a" style="left:-1px;top:639px;width:27px;text-align:center;font-size:11px;line-height:14px;color:#100820">5 б</div>
<div class="a" style="left:0;top:665px;width:1023px;height:1px;background:#000"></div>
<div class="a" style="left:-1px;top:679px;width:27px;text-align:center;font-size:11px;line-height:14px;color:#100820">5 в</div>
<div class="a" style="left:0;top:705px;width:1023px;height:1px;background:#000"></div>
<div class="a" style="left:-1px;top:719px;width:27px;text-align:center;font-size:11px;line-height:14px;color:#100820">6 а</div>
<div class="a" style="left:0;top:745px;width:1023px;height:1px;background:#000"></div>
<div class="a" style="left:-1px;top:759px;width:27px;text-align:center;font-size:11px;line-height:14px;color:#100820">6 б</div>
<div class="a" style="left:0;top:785px;width:1023px;height:1px;background:#000"></div>
<div class="a" style="left:-1px;top:799px;width:27px;text-align:center;font-size:11px;line-height:14px;color:#100820">6 в</div>
<div class="a" style="left:0;top:825px;width:1023px;height:1px;background:#000"></div>
<div class="a" style="left:-1px;top:839px;width:27px;text-align:center;font-size:11px;line-height:14px;color:#100820">7 а</div>
<svg class="a" style="left:22px;top:218px" width="5" height="6"><path d="M4.5 0V5.5H0Z" fill="#909094"/></svg>
<div class="cell" style="left:985px;top:586px;width:52px;height:19px;background:linear-gradient(#f0ffd0,#e0ffa0);justify-content:flex-start;padding-left:4px">РЕ- ИУЧ</div>
<div class="a" style="left:264px;top:174px;width:711px;height:547px;background:#f0f0f0;box-shadow:0 -2px 12px 3px rgba(0,0,0,0.36);border:1px solid #c8c8c8"></div>
<div class="a" style="left:265px;top:175px;width:709px;height:29px;background:#fff"></div>
<div class="a" style="left:272px;top:182px;font-size:12px;line-height:14px;color:#999">Учители</div>
<div class="a" style="left:856px;top:188px;width:10px;height:1px;background:#707070"></div>
<div class="a" style="left:901px;top:183px;width:10px;height:10px;border:1px solid #707070"></div>
<svg class="a" style="left:946px;top:182px" width="12" height="12"><path d="M1 1L11 11M11 1L1 11" stroke="#707070" stroke-width="1"/></svg>
<div class="a" style="left:370px;top:217px;font-size:11px;line-height:14px">Въведи учители :</div>
<svg class="a" style="left:296px;top:244px" width="39" height="44" viewBox="0 0 39 44">
<rect x="0.5" y="0.5" width="37" height="42" rx="1.5" fill="#8ab4ee" stroke="#5a88c8"/>
<rect x="0.5" y="0.5" width="6" height="42" fill="#5080c0"/>
<rect x="12" y="10" width="18" height="12" fill="#fff"/>
<rect x="14" y="13" width="14" height="1.6" fill="#c4d0e0"/><rect x="14" y="17" width="14" height="1.6" fill="#c4d0e0"/>
</svg>
<div class="a" style="left:358px;top:234px;width:450px;height:80px;background:#fff;border:1px solid #828790"></div>
<div class="a" style="left:359px;top:235px;width:429px;height:23px;background:linear-gradient(#fff,#f4f4f4);border-bottom:1px solid #e0e0e0"></div>
<div class="a" style="left:519px;top:236px;width:1px;height:22px;background:#d8d8d8"></div>
<div class="a" style="left:569px;top:236px;width:1px;height:22px;background:#d8d8d8"></div>
<div class="a" style="left:619px;top:236px;width:1px;height:22px;background:#d8d8d8"></div>
<div class="a" style="left:679px;top:236px;width:1px;height:22px;background:#d8d8d8"></div>
<div class="a" style="left:779px;top:236px;width:1px;height:22px;background:#d8d8d8"></div>
<div class="a" style="left:365px;top:240px;font-size:11px;line-height:14px;white-space:nowrap">Име</div>
<div class="a" style="left:525px;top:240px;font-size:11px;line-height:14px;white-space:nowrap">Кратко</div>
<div class="a" style="left:625px;top:240px;font-size:11px;line-height:14px;white-space:nowrap">Условия</div>
<div class="a" style="left:685px;top:240px;font-size:11px;line-height:14px;white-space:nowrap">Класен ръково…</div>
<div class="a" style="left:589px;top:240px;width:25px;text-align:right;font-size:11px;line-height:14px">Брой</div>
<div class="a" style="left:785px;top:240px;font-size:11px;line-height:14px;color:#222">(</div>
<div class="a" style="left:788px;top:235px;width:18px;height:70px;background:#f0f0f0"></div>
<svg class="a" style="left:792px;top:240px" width="10" height="7"><path d="M1 6L5 2L9 6" stroke="#555" stroke-width="1.6" fill="none"/></svg>
<div class="a" style="left:364px;top:259px;width:424px;height:21px;background:#0078d7"></div>
<svg class="a" style="left:364px;top:262px" width="17" height="16" viewBox="0 0 17 16">
<path d="M8.5 1L16.5 5L8.5 9L0.5 5Z" fill="#333"/><path d="M3.5 7V11.5C3.5 13 6 14.5 8.5 14.5C11 14.5 13.5 13 13.5 11.5V7L8.5 9.5Z" fill="#3a3a3a"/>
<path d="M8.5 5L3 6.5V12" stroke="#f0a020" stroke-width="1.2" fill="none"/></svg>
<svg class="a" style="left:364px;top:283px" width="17" height="16" viewBox="0 0 17 16">
<path d="M8.5 1L16.5 5L8.5 9L0.5 5Z" fill="#333"/><path d="M3.5 7V11.5C3.5 13 6 14.5 8.5 14.5C11 14.5 13.5 13 13.5 11.5V7L8.5 9.5Z" fill="#3a3a3a"/>
<path d="M8.5 5L3 6.5V12" stroke="#f0a020" stroke-width="1.2" fill="none"/></svg>
<div class="a" style="left:381px;top:260px;width:17px;height:18px;background:#fdc864;border:1px solid #fff"></div>
<div class="a" style="left:382px;top:282px;width:15px;height:17px;background:#00ffff"></div>
<div class="a" style="left:400px;top:263px;font-size:11px;line-height:14px;color:#fff;white-space:nowrap">Тестов Георгиева</div>
<div class="a" style="left:525px;top:263px;font-size:11px;line-height:14px;color:#fff">T....</div>
<div class="a" style="left:589px;top:263px;width:25px;text-align:right;font-size:11px;line-height:14px;color:#fff">23</div>
<div class="a" style="left:400px;top:284px;font-size:11px;line-height:14px;white-space:nowrap">Тестов Радева</div>
<div class="a" style="left:525px;top:284px;font-size:11px;line-height:14px">T....</div>
<div class="a" style="left:589px;top:284px;width:25px;text-align:right;font-size:11px;line-height:14px">19</div>
<svg class="a" style="left:620px;top:259px" width="58" height="19" viewBox="0 0 58 19"><rect x="0" y="0" width="58" height="19" fill="#000"/><rect x="1" y="1" width="56" height="2" fill="#fff"/><rect x="2" y="4" width="7" height="2" fill="#00e000"/><rect x="2" y="7" width="7" height="2" fill="#00e000"/><rect x="2" y="10" width="7" height="2" fill="#00e000"/><rect x="2" y="13" width="7" height="2" fill="#00e000"/><rect x="2" y="16" width="7" height="2" fill="#00e000"/><rect x="10" y="4" width="7" height="2" fill="#00e000"/><rect x="10" y="7" width="7" height="2" fill="#00e000"/><rect x="10" y="10" width="7" height="2" fill="#00e000"/><rect x="10" y="13" width="7" height="2" fill="#00e000"/><rect x="10" y="16" width="7" height="2" fill="#00e000"/><rect x="18" y="4" width="7" height="2" fill="#00e000"/><rect x="18" y="7" width="7" height="2" fill="#00e000"/><rect x="18" y="10" width="7" height="2" fill="#00e000"/><rect x="18" y="13" width="7" height="2" fill="#00e000"/><rect x="18" y="16" width="7" height="2" fill="#00e000"/><rect x="26" y="4" width="7" height="2" fill="#00e000"/><rect x="26" y="7" width="7" height="2" fill="#00e000"/><rect x="26" y="10" width="7" height="2" fill="#00e000"/><rect x="26" y="13" width="7" height="2" fill="#00e000"/><rect x="26" y="16" width="7" height="2" fill="#00e000"/><rect x="34" y="4" width="7" height="2" fill="#00e000"/><rect x="34" y="7" width="7" height="2" fill="#00e000"/><rect x="34" y="10" width="7" height="2" fill="#00e000"/><rect x="34" y="13" width="7" height="2" fill="#00e000"/><rect x="34" y="16" width="7" height="2" fill="#00e000"/><rect x="42" y="4" width="7" height="2" fill="#00e000"/><rect x="42" y="7" width="7" height="2" fill="#00e000"/><rect x="42" y="10" width="7" height="2" fill="#00e000"/><rect x="42" y="13" width="7" height="2" fill="#00e000"/><rect x="42" y="16" width="7" height="2" fill="#00e000"/><rect x="50" y="4" width="7" height="2" fill="#00e000"/><rect x="50" y="7" width="7" height="2" fill="#00e000"/><rect x="50" y="10" width="7" height="2" fill="#00e000"/><rect x="50" y="13" width="7" height="2" fill="#00e000"/><rect x="50" y="16" width="7" height="2" fill="#00e000"/></svg>
<svg class="a" style="left:620px;top:280px" width="58" height="19" viewBox="0 0 58 19"><rect x="0" y="0" width="58" height="19" fill="#000"/><rect x="1" y="1" width="56" height="2" fill="#fff"/><rect x="2" y="4" width="7" height="2" fill="#00e000"/><rect x="2" y="7" width="7" height="2" fill="#00e000"/><rect x="2" y="10" width="7" height="2" fill="#00e000"/><rect x="2" y="13" width="7" height="2" fill="#00e000"/><rect x="2" y="16" width="7" height="2" fill="#00e000"/><rect x="10" y="4" width="7" height="2" fill="#00e000"/><rect x="10" y="7" width="7" height="2" fill="#00e000"/><rect x="10" y="10" width="7" height="2" fill="#00e000"/><rect x="10" y="13" width="7" height="2" fill="#00e000"/><rect x="10" y="16" width="7" height="2" fill="#00e000"/><rect x="18" y="4" width="7" height="2" fill="#00e000"/><rect x="18" y="7" width="7" height="2" fill="#00e000"/><rect x="18" y="10" width="7" height="2" fill="#00e000"/><rect x="18" y="13" width="7" height="2" fill="#00e000"/><rect x="18" y="16" width="7" height="2" fill="#00e000"/><rect x="26" y="4" width="7" height="2" fill="#00e000"/><rect x="26" y="7" width="7" height="2" fill="#00e000"/><rect x="26" y="10" width="7" height="2" fill="#00e000"/><rect x="26" y="13" width="7" height="2" fill="#00e000"/><rect x="26" y="16" width="7" height="2" fill="#00e000"/><rect x="34" y="4" width="7" height="2" fill="#00e000"/><rect x="34" y="7" width="7" height="2" fill="#00e000"/><rect x="34" y="10" width="7" height="2" fill="#00e000"/><rect x="34" y="13" width="7" height="2" fill="#00e000"/><rect x="34" y="16" width="7" height="2" fill="#00e000"/><rect x="42" y="4" width="7" height="2" fill="#00e000"/><rect x="42" y="7" width="7" height="2" fill="#00e000"/><rect x="42" y="10" width="7" height="2" fill="#00e000"/><rect x="42" y="13" width="7" height="2" fill="#00e000"/><rect x="42" y="16" width="7" height="2" fill="#00e000"/><rect x="50" y="4" width="7" height="2" fill="#00e000"/><rect x="50" y="7" width="7" height="2" fill="#00e000"/><rect x="50" y="10" width="7" height="2" fill="#00e000"/><rect x="50" y="13" width="7" height="2" fill="#00e000"/><rect x="50" y="16" width="7" height="2" fill="#00e000"/></svg>
<div class="btn" style="left:822px;top:234px;width:132px;height:27px;justify-content:flex-start"></div><svg class="a" style="left:830px;top:239px" width="17" height="17"><circle cx="8.5" cy="8.5" r="7.5" fill="#3fbf4f"/><path d="M8.5 4.5V12.5M4.5 8.5H12.5" stroke="#fff" stroke-width="2.4"/></svg><div class="a" style="left:854px;top:241px;font-size:11px;line-height:14px;white-space:nowrap">Нов</div>
<div class="btn" style="left:822px;top:270px;width:132px;height:27px;justify-content:flex-start"></div><svg class="a" style="left:830px;top:276px" width="17" height="16" viewBox="0 0 17 16"><path d="M8.5 1L16.5 5L8.5 9L0.5 5Z" fill="#333"/><path d="M3.5 7V11.5C3.5 13 6 14.5 8.5 14.5C11 14.5 13.5 13 13.5 11.5V7L8.5 9.5Z" fill="#3a3a3a"/><path d="M8.5 5L2 6.5V13" stroke="#f0a020" stroke-width="1.2" fill="none"/></svg><div class="a" style="left:854px;top:277px;font-size:11px;line-height:14px;white-space:nowrap">Редактирай</div>
<div class="btn" style="left:822px;top:305px;width:132px;height:27px;justify-content:flex-start"></div><svg class="a" style="left:830px;top:310px" width="17" height="17"><circle cx="8.5" cy="8.5" r="7.5" fill="#e8373f"/><path d="M4 8.5H13" stroke="#fff" stroke-width="3"/></svg><div class="a" style="left:854px;top:312px;font-size:11px;line-height:14px;white-space:nowrap">Премахни</div>
<div class="btn" style="left:822px;top:372px;width:132px;height:27px;justify-content:flex-start"></div><svg class="a" style="left:831px;top:377px" width="16" height="16"><rect x="4" y="4" width="11" height="11" fill="#1e90ff"/><rect x="1" y="1" width="11" height="11" fill="#ff0066"/></svg><div class="a" style="left:854px;top:379px;font-size:11px;line-height:14px;white-space:nowrap">Часове</div>
<div class="btn" style="left:822px;top:408px;width:132px;height:27px;justify-content:flex-start"></div><svg class="a" style="left:830px;top:413px" width="17" height="17"><circle cx="8.5" cy="8.5" r="7.2" fill="#fff" stroke="#4a78b8" stroke-width="1.3"/><path d="M8.5 4V9L11 11" stroke="#333" stroke-width="1.2" fill="none"/></svg><div class="a" style="left:854px;top:415px;font-size:11px;line-height:14px;white-space:nowrap">Условия</div>
<div class="btn" style="left:822px;top:444px;width:132px;height:27px;justify-content:flex-start"></div><svg class="a" style="left:830px;top:449px" width="17" height="17"><path d="M5.5 1V16M11.5 1V16M1 5.5H16M1 11.5H16" stroke="#8a78a8" stroke-width="2.8"/></svg><div class="a" style="left:854px;top:451px;font-size:11px;line-height:14px;white-space:nowrap">Ограничения</div>
<div class="a" style="left:817px;top:266px;width:142px;height:34px;border:3px solid #e81b23"></div>
<svg class="a" style="left:818px;top:607px" width="10" height="12"><path d="M5 1.5V11.5M1.5 5.5L5 2L8.5 5.5" stroke="#000" stroke-width="2" fill="none" stroke-linecap="butt"/></svg>
<svg class="a" style="left:818px;top:633px" width="10" height="12"><path d="M5 0.5V10.5M1.5 6.5L5 10L8.5 6.5" stroke="#000" stroke-width="2" fill="none"/></svg>
<div class="a" style="left:810px;top:674px;width:154px;height:1px;background:#a0a0a0"></div>
<div class="btn" style="left:891px;top:689px;width:73px;height:21px">Затвори</div>
<svg class="a" style="left:962px;top:709px" width="10" height="10"><rect x="7" y="1" width="2" height="2" fill="#b8b8b8"/><rect x="7" y="4" width="2" height="2" fill="#b8b8b8"/><rect x="4" y="4" width="2" height="2" fill="#b8b8b8"/><rect x="7" y="7" width="2" height="2" fill="#b8b8b8"/><rect x="4" y="7" width="2" height="2" fill="#b8b8b8"/><rect x="1" y="7" width="2" height="2" fill="#b8b8b8"/></svg>
<div class="a" style="left:19px;top:300px;width:791px;height:518px;background:#f0f0f0;border:1px solid #1883d7;box-shadow:0 -2px 12px 3px rgba(0,0,0,0.33)"></div>
<div class="a" style="left:20px;top:301px;width:789px;height:25px;background:#fff"></div>
<div class="a" style="left:23px;top:306px;font-size:11.8px;line-height:14px">Учител</div>
<svg class="a" style="left:788px;top:307px" width="12" height="12"><path d="M1 1L11 11M11 1L1 11" stroke="#111" stroke-width="1.1"/></svg>
<div class="lbl" style="left:42px;top:362px;">Име :</div>
<div class="lbl" style="left:42px;top:394px;">Съкращение:</div>
<div class="lbl" style="left:42px;top:425px;">Норматив на учител</div>
<div class="inp" style="left:161px;top:357px;width:230px;height:20px;border-color:#0078d7"></div>
<div class="a" style="left:166px;top:360px;width:93px;height:13px;background:#0078d7"></div>
<div class="a" style="left:166px;top:360px;font-size:11px;line-height:13px;color:#fff;white-space:nowrap">Тестов Георгиева</div>
<div class="btn" style="left:396px;top:358px;width:19px;height:18px;font-size:13px">+</div>
<div class="inp" style="left:161px;top:391px;width:90px;height:20px"></div>
<div class="a" style="left:166px;top:394px;font-size:11px;line-height:14px;white-space:nowrap">T.Георгиева</div>
<div class="a" style="left:260px;top:394px;width:13px;height:13px;background:#fff;border:1px solid #333"></div>
<div class="lbl" style="left:275px;top:394px;">Мъж</div>
<div class="inp" style="left:161px;top:422px;width:90px;height:20px"></div>
<div class="lbl" style="left:259px;top:425px;">(по избор)</div>
<div class="a" style="left:451px;top:349px;width:80px;height:21px;overflow:hidden;font-size:11px;line-height:13px">Електронна<br>поща :</div>
<div class="inp" style="left:535px;top:346px;width:188px;height:20px"></div>
<div class="lbl" style="left:451px;top:372px;">Телефон :</div>
<div class="inp" style="left:535px;top:368px;width:188px;height:20px"></div>
<div class="lbl" style="left:451px;top:440px;">Номер:</div>
<div class="inp" style="left:535px;top:437px;width:138px;height:20px"></div>
<div class="grp" style="left:37px;top:491px;width:395px;height:63px"></div>
<div class="grpl" style="left:44px;top:485px">Класен ръководител за клас</div>
<div class="a" style="left:302px;top:515px;width:120px;height:23px;border-right:1px solid #a0a0a0;border-bottom:1px solid #a0a0a0;display:flex;align-items:center;justify-content:center;font-size:11px">Промяна</div>
<div class="grp" style="left:37px;top:569px;width:395px;height:98px"></div>
<div class="grpl" style="left:44px;top:563px">Цвят</div>
<div class="a" style="left:49px;top:584px;width:213px;height:75px;background:#fdc864"></div>
<div class="btn" style="left:278px;top:603px;width:118px;height:21px">Промяна</div>
<div class="grp" style="left:452px;top:491px;width:347px;height:60px"></div>
<div class="grpl" style="left:459px;top:485px">Класни стаи</div>
<div class="btn" style="left:485px;top:516px;width:273px;height:24px">Класни стаи</div>
<div class="a" style="left:448px;top:482px;width:357px;height:72px;border:3px solid #e81b23"></div>
<div class="grp" style="left:452px;top:569px;width:347px;height:96px"></div>
<div class="btn" style="left:486px;top:597px;width:271px;height:21px">Персонализирани полета</div>
<div class="btn" style="left:338px;top:779px;width:73px;height:21px;border:2px solid #0078d7">OK</div>
<div class="btn" style="left:422px;top:779px;width:73px;height:21px">Откажи</div>
</body></html>
